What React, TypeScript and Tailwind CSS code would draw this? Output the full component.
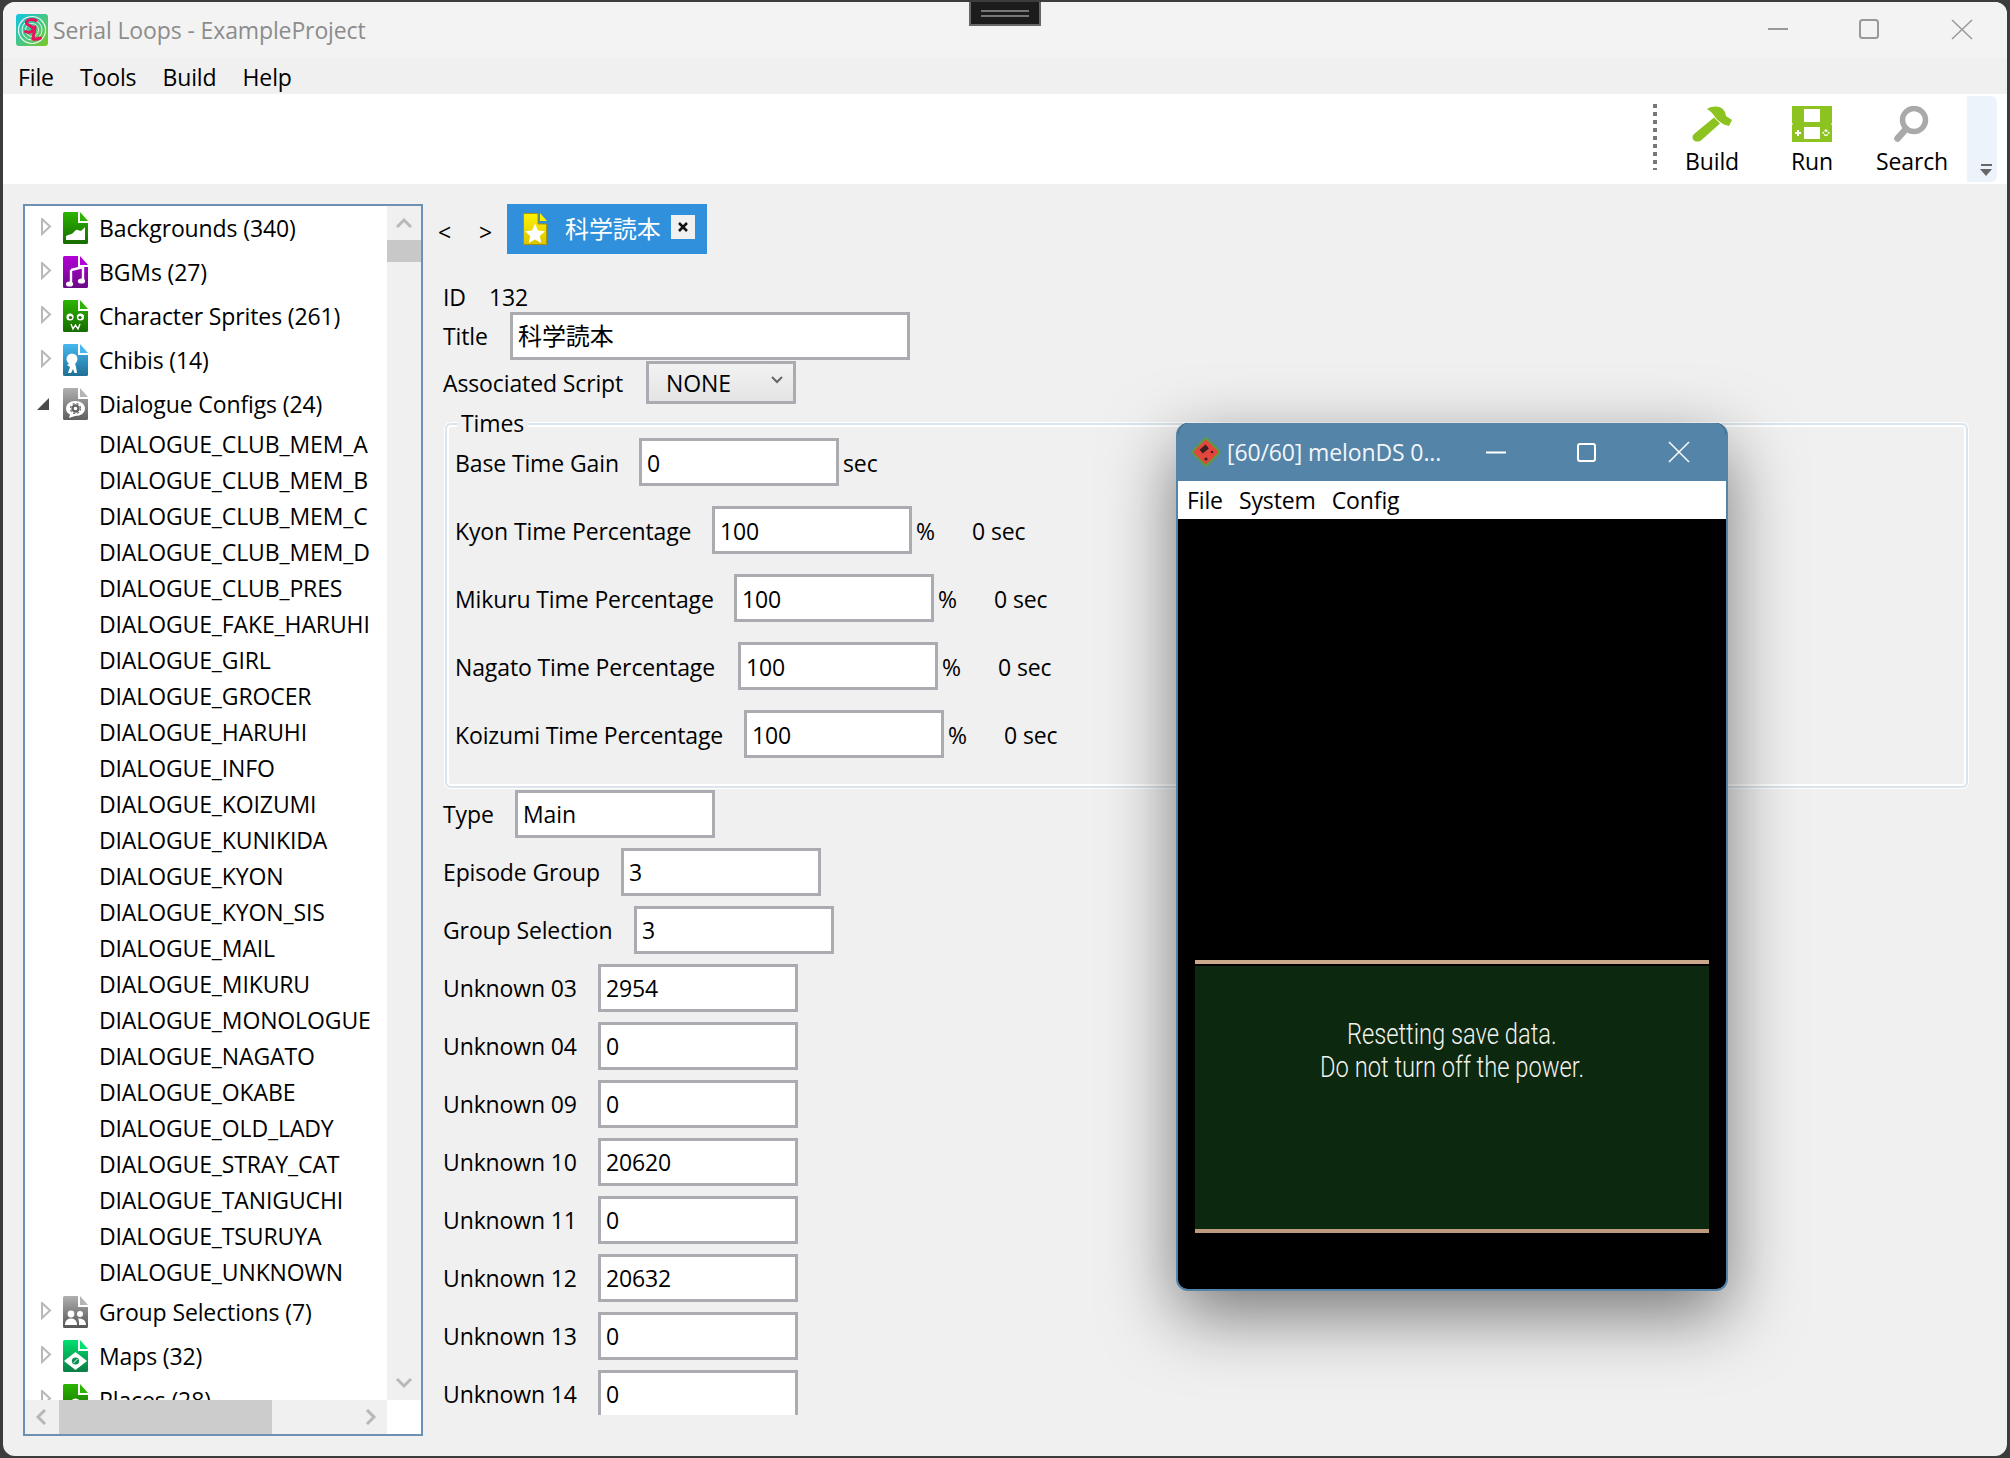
import React from "react";

const topGroups = [
  "DIALOGUE_CLUB_MEM_A",
  "DIALOGUE_CLUB_MEM_B",
  "DIALOGUE_CLUB_MEM_C",
  "DIALOGUE_CLUB_MEM_D",
  "DIALOGUE_CLUB_PRES",
  "DIALOGUE_FAKE_HARUHI",
  "DIALOGUE_GIRL",
  "DIALOGUE_GROCER",
  "DIALOGUE_HARUHI",
  "DIALOGUE_INFO",
  "DIALOGUE_KOIZUMI",
  "DIALOGUE_KUNIKIDA",
  "DIALOGUE_KYON",
  "DIALOGUE_KYON_SIS",
  "DIALOGUE_MAIL",
  "DIALOGUE_MIKURU",
  "DIALOGUE_MONOLOGUE",
  "DIALOGUE_NAGATO",
  "DIALOGUE_OKABE",
  "DIALOGUE_OLD_LADY",
  "DIALOGUE_STRAY_CAT",
  "DIALOGUE_TANIGUCHI",
  "DIALOGUE_TSURUYA",
  "DIALOGUE_UNKNOWN",
];

const FileIcon = ({ id, from, to, fold, children }: { id: string; from: string; to: string; fold: string; children?: React.ReactNode }) => (
  <svg width="25" height="32" viewBox="0 0 25 32" className="shrink-0">
    <defs>
      <linearGradient id={id} x1="0" y1="0" x2="0" y2="1">
        <stop offset="0" stopColor={from} />
        <stop offset="1" stopColor={to} />
      </linearGradient>
    </defs>
    <path d="M0 1.5Q0 0 1.5 0H15V11H25V30.5Q25 32 23.5 32H1.5Q0 32 0 30.5Z" fill={`url(#${id})`} />
    <path d="M17 0L25 9H17Z" fill={fold} />
    {children}
  </svg>
);

const Backgrounds = () => (
  <FileIcon id="g-bg" from="#2cb400" to="#176b00" fold="#2cb400">
    <path d="M3 28V24C6 22 8 23 10 21C12 19 13 17 15 18C17 19 18 20 22 15V28Z" fill="#fff" />
  </FileIcon>
);

const Bgms = () => (
  <FileIcon id="g-bgm" from="#b400d8" to="#6a0a86" fold="#b400d8">
    <path d="M8 14L20 11V25" fill="none" stroke="#fff" strokeWidth="2.4" />
    <path d="M8 14V28" fill="none" stroke="#fff" strokeWidth="2.4" />
    <ellipse cx="6.5" cy="28" rx="3.6" ry="2.6" fill="#fff" />
    <ellipse cx="18.5" cy="25" rx="3.6" ry="2.6" fill="#fff" />
  </FileIcon>
);

const Sprites = () => (
  <FileIcon id="g-spr" from="#2cb400" to="#176b00" fold="#2cb400">
    <circle cx="7" cy="17" r="3.6" fill="#fff" />
    <circle cx="17.5" cy="17" r="3.6" fill="#fff" />
    <circle cx="7.5" cy="17.5" r="1.6" fill="#1c6e00" />
    <circle cx="17" cy="17.5" r="1.6" fill="#1c6e00" />
    <path d="M8 24L10 29L12.5 25L15 29L17 24" fill="none" stroke="#fff" strokeWidth="1.4" />
  </FileIcon>
);

const Chibis = () => (
  <FileIcon id="g-chi" from="#45b8f0" to="#1f6f94" fold="#45b8f0">
    <circle cx="9" cy="15" r="5.5" fill="#fff" />
    <path d="M7 19H12L13 23L14 29H11.5L10 25L8 29H5L7 23L4 21Z" fill="#fff" />
  </FileIcon>
);

const Dialogue = () => (
  <FileIcon id="g-dia" from="#b0b0b0" to="#5f5f5f" fold="#b5b5b5">
    <path d="M12 13C18 13 22 16.5 22 20.5C22 25 18 28 12 28L6 30L7 26.5C4 25 3 23 3 20.5C3 16.5 7 13 12 13Z" fill="#fff" />
    <circle cx="12.5" cy="20.5" r="3" fill="none" stroke="#666" strokeWidth="2.4" />
    <circle cx="12.5" cy="20.5" r="5" fill="none" stroke="#666" strokeWidth="1.2" strokeDasharray="2 2" />
  </FileIcon>
);

const Groups = () => (
  <FileIcon id="g-grp" from="#b0b0b0" to="#555555" fold="#b5b5b5">
    <circle cx="8" cy="18" r="3.4" fill="#fff" />
    <circle cx="17" cy="18" r="3" fill="#fff" />
    <path d="M2 29C2 24 5 22.5 8 22.5C11 22.5 14 24 14 29Z" fill="#fff" />
    <path d="M15 22.5C19 22 23 24 23 29H16C16 26 16 24 15 22.5Z" fill="#fff" />
  </FileIcon>
);

const Maps = () => (
  <FileIcon id="g-map" from="#00e070" to="#0a7d45" fold="#00e070">
    <path d="M12.5 12L24 21L12.5 30L1 21Z" fill="#fff" />
    <circle cx="12.5" cy="21" r="3.6" fill="#0a8f50" />
    <path d="M10.5 23L14.5 19" stroke="#fff" strokeWidth="1" />
  </FileIcon>
);

const Places = () => (
  <FileIcon id="g-pla" from="#2cb400" to="#176b00" fold="#2cb400">
    <circle cx="12.5" cy="20" r="5.5" fill="#fff" />
  </FileIcon>
);

const Logo = () => (
  <svg width="32" height="32" viewBox="0 0 32 32" className="shrink-0">
    <defs>
      <linearGradient id="g-logo" x1="0" y1="0" x2="1" y2="1">
        <stop offset="0" stopColor="#10c4e8" />
        <stop offset="1" stopColor="#7cc820" />
      </linearGradient>
    </defs>
    <rect width="32" height="32" rx="3" fill="url(#g-logo)" />
    <circle cx="16" cy="16" r="13.5" fill="none" stroke="#e6f7ef" strokeWidth="1.2" />
    <circle cx="16" cy="16" r="10" fill="none" stroke="#e6f7ef" strokeWidth="1" />
    <circle cx="16" cy="16" r="6.5" fill="none" stroke="#e6f7ef" strokeWidth="1" />
    <path d="M20 6.5C15 4.5 10 6 10.5 9C11 12 17 11.5 17 15C17 18.5 12 19 9.5 17.5" fill="none" stroke="#e8135c" strokeWidth="3" strokeLinecap="round" />
    <path d="M19 13C18.5 17 17.5 21 17 25C19.5 25.5 22 25 24.5 24" fill="none" stroke="#e8135c" strokeWidth="3" strokeLinecap="round" />
  </svg>
);

const Hammer = () => (
  <svg width="40" height="36" viewBox="0 0 40 36">
    <path d="M15 3C22 -1 30 0 33 6L34 10L40 14L37 20L32 18.5L29.5 17L26 14.5L23 11C21 8 19 5 15 3Z" fill="#8cc320" />
    <path d="M22 11.5L28 17.5L9 34.5C7 36 3 36 1.5 34C0 32.5 0 30 2 28Z" fill="#8cc320" />
  </svg>
);

const Console = () => (
  <svg width="40" height="36" viewBox="0 0 40 36">
    <path d="M0 0H40V17L39 18L40 19V36H0V19L1 18L0 17Z" fill="#8cc320" />
    <rect x="12" y="3" width="16" height="13" fill="#fff" />
    <rect x="12" y="21" width="16" height="12" fill="#fff" />
    <path d="M3 27H9M6 24V30" stroke="#fff" strokeWidth="2" />
    <path d="M34 24L37 27L34 30L31 27Z" fill="none" stroke="#fff" strokeWidth="1.5" strokeDasharray="2 1" />
  </svg>
);

const Magnifier = () => (
  <svg width="36" height="36" viewBox="0 0 36 36">
    <circle cx="20" cy="14" r="11.5" fill="none" stroke="#a9a9a9" strokeWidth="5.5" />
    <path d="M12 23L3.5 32.5" stroke="#a9a9a9" strokeWidth="6.5" strokeLinecap="round" />
  </svg>
);

const StarFile = () => (
  <svg width="24" height="32" viewBox="0 0 24 32" className="shrink-0">
    <defs>
      <linearGradient id="g-star" x1="0" y1="0" x2="0" y2="1">
        <stop offset="0" stopColor="#fff200" />
        <stop offset="1" stopColor="#dcc400" />
      </linearGradient>
    </defs>
    <path d="M0.5 0.5H15V11H23.5V31.5H0.5Z" fill="url(#g-star)" stroke="#a89600" />
    <path d="M17 0L24 8H17Z" fill="#fff200" />
    <path d="M12 10.5L15 17.5L22 18.2L16.8 23L18.3 30L12 26.4L5.7 30L7.2 23L2 18.2L9 17.5Z" fill="#fff" />
  </svg>
);

const MelonIcon = () => (
  <svg width="30" height="30" viewBox="0 0 30 30" className="shrink-0">
    <rect x="4" y="4" width="22" height="22" rx="3" transform="rotate(45 15 15)" fill="#5f9a3c" />
    <rect x="6" y="6" width="18" height="18" rx="2" transform="rotate(45 15 15)" fill="#e2463f" />
    <rect x="9" y="10" width="8" height="5" transform="rotate(-40 12.5 12)" fill="#3a2020" />
    <circle cx="15" cy="22" r="1.6" fill="#3a2020" />
    <circle cx="21" cy="15" r="1.3" fill="#3a2020" />
  </svg>
);

const Expand = ({ open }: { open?: boolean }) => (
  <div className={`flex w-[38px] shrink-0 ${open ? "pl-[12px]" : "pl-[16px] pb-[2px]"}`}>
    {open ? (
      <svg width="14" height="14" viewBox="0 0 14 14">
        <path d="M0 13H12V1Z" fill="#4a4a4a" />
      </svg>
    ) : (
      <svg width="12" height="18" viewBox="0 0 12 18">
        <path d="M1 1L9 8.5L1 16Z" fill="none" stroke="#b8b8b8" strokeWidth="2" />
      </svg>
    )}
  </div>
);

const TreeRow = ({ icon, label, open }: { icon: React.ReactNode; label: string; open?: boolean }) => (
  <div className="flex h-[44px] shrink-0 items-center">
    <Expand open={open} />
    {icon}
    <span className="ml-[11px] whitespace-nowrap">{label}</span>
  </div>
);

const Chevron = ({ d }: { d: string }) => (
  <svg width="16" height="16" viewBox="0 0 16 16">
    <path d={d} fill="none" stroke="#b8b8b8" strokeWidth="3" />
  </svg>
);

const Tree = () => (
  <div className="grid h-[1232px] w-[400px] shrink-0 grid-cols-[362px_34px] grid-rows-[1194px_34px] border-2 border-[#6f8fb3] bg-white">
    <div className="overflow-hidden">
      <TreeRow icon={<Backgrounds />} label="Backgrounds (340)" />
      <TreeRow icon={<Bgms />} label="BGMs (27)" />
      <TreeRow icon={<Sprites />} label="Character Sprites (261)" />
      <TreeRow icon={<Chibis />} label="Chibis (14)" />
      <TreeRow icon={<Dialogue />} label="Dialogue Configs (24)" open />
      {topGroups.map((name) => (
        <div key={name} className="flex h-[36px] items-center pl-[74px] whitespace-nowrap">
          {name}
        </div>
      ))}
      <TreeRow icon={<Groups />} label="Group Selections (7)" />
      <TreeRow icon={<Maps />} label="Maps (32)" />
      <TreeRow icon={<Places />} label="Places (28)" />
    </div>
    <div className="flex flex-col items-center bg-[#f0f0f0]">
      <div className="flex h-[34px] w-full items-center justify-center">
        <Chevron d="M1 12L8 5L15 12" />
      </div>
      <div className="h-[22px] w-full bg-[#c8c8c8]" />
      <div className="mt-auto flex h-[34px] w-full items-center justify-center">
        <Chevron d="M1 4L8 11L15 4" />
      </div>
    </div>
    <div className="flex items-center bg-[#f0f0f0]">
      <div className="flex w-[34px] justify-center">
        <Chevron d="M11 1L4 8L11 15" />
      </div>
      <div className="h-full w-[213px] bg-[#cccccc]" />
      <div className="ml-auto flex w-[34px] justify-center">
        <Chevron d="M5 1L12 8L5 15" />
      </div>
    </div>
    <div className="bg-white" />
  </div>
);

const TextBox = ({ value, className = "w-[200px]" }: { value: string; className?: string }) => (
  <div className={`flex h-[48px] shrink-0 items-center border-[3px] border-[#abacb1] bg-white pl-[5px] ${className}`}>{value}</div>
);

const timeRows = [
  { label: "Kyon Time Percentage", width: "w-[257px]" },
  { label: "Mikuru Time Percentage", width: "w-[279px]" },
  { label: "Nagato Time Percentage", width: "w-[283px]" },
  { label: "Koizumi Time Percentage", width: "w-[289px]" },
];

const fieldRows = [
  { label: "Type", width: "w-[72px]", value: "Main" },
  { label: "Episode Group", width: "w-[178px]", value: "3" },
  { label: "Group Selection", width: "w-[191px]", value: "3" },
  { label: "Unknown 03", width: "w-[155px]", value: "2954" },
  { label: "Unknown 04", width: "w-[155px]", value: "0" },
  { label: "Unknown 09", width: "w-[155px]", value: "0" },
  { label: "Unknown 10", width: "w-[155px]", value: "20620" },
  { label: "Unknown 11", width: "w-[155px]", value: "0" },
  { label: "Unknown 12", width: "w-[155px]", value: "20632" },
  { label: "Unknown 13", width: "w-[155px]", value: "0" },
  { label: "Unknown 14", width: "w-[155px]", value: "0" },
];

const Editor = () => (
  <div className="h-[1211px] flex-1 overflow-hidden pl-[20px]">
    <div className="flex h-[50px] items-center">
      <span className="-ml-[5px] mt-[6px] w-[41px]">&lt;</span>
      <span className="mt-[6px] w-[28px]">&gt;</span>
      <div className="flex h-[50px] w-[200px] items-center bg-[#3090dc] pl-[16px] text-white">
        <StarFile />
        <span className="ml-[18px] w-[106px] whitespace-nowrap text-[24px]">科学読本</span>
        <div className="mb-[4px] flex h-[24px] w-[24px] items-center justify-center bg-[#f0f0f0]">
          <svg width="10" height="10" viewBox="0 0 10 10">
            <path d="M1 1L9 9M9 1L1 9" stroke="#111" strokeWidth="2.5" />
          </svg>
        </div>
      </div>
    </div>
    <div className="mb-[1px] mt-[29px] flex h-[28px] items-center">
      <span className="w-[46px]">ID</span>
      <span>132</span>
    </div>
    <div className="flex items-center">
      <span className="w-[67px]">Title</span>
      <TextBox value="科学読本" className="w-[400px] text-[24px]" />
    </div>
    <div className="mt-[1px] flex items-center">
      <span className="w-[203px]">Associated Script</span>
      <div className="flex h-[43px] w-[150px] items-center justify-between border-[3px] border-[#abacb1] bg-gradient-to-b from-[#f2f2f2] to-[#e4e4e4] pl-[17px] pr-[10px]">
        <span>NONE</span>
        <svg width="12" height="8" viewBox="0 0 12 8" className="mb-[6px]">
          <path d="M1 1L6 6L11 1" fill="none" stroke="#666" strokeWidth="2" />
        </svg>
      </div>
    </div>
    <div className="relative ml-[2px] mt-[19px] flex h-[365px] w-[1523px] flex-col gap-[20px] rounded-[6px] border-2 border-[#dbe4ea] pl-[8px] pt-[13px] shadow-[inset_0_0_0_2px_#fff,0_0_0_1px_#fff]">
      <span className="absolute -top-[16px] left-[10px] bg-[#f0f0f0] px-[4px] leading-[28px]">Times</span>
      <div className="flex items-center">
        <span className="w-[184px] whitespace-nowrap pt-[2px]">Base Time Gain</span>
        <TextBox value="0" className="w-[200px] pt-[2px]" />
        <span className="ml-[4px] pt-[2px]">sec</span>
      </div>
      {timeRows.map((row) => (
        <div key={row.label} className="flex items-center">
          <span className={`whitespace-nowrap pt-[2px] ${row.width}`}>{row.label}</span>
          <TextBox value="100" className="w-[200px] pt-[2px]" />
          <span className="ml-[4px] w-[56px] pt-[2px]">%</span>
          <span className="pt-[2px]">0 sec</span>
        </div>
      ))}
    </div>
    <div className="mt-[2px] flex flex-col gap-[10px]">
      {fieldRows.map((row) => (
        <div key={row.label} className="flex items-center">
          <span className={`whitespace-nowrap ${row.width}`}>{row.label}</span>
          <TextBox value={row.value} />
        </div>
      ))}
    </div>
  </div>
);

const MelonWindow = () => (
  <div className="absolute left-[1173px] top-[421px] flex h-[868px] w-[552px] flex-col overflow-hidden rounded-[12px] border-x-2 border-b-2 border-[#5484a8] bg-black shadow-[0_24px_70px_rgba(0,0,0,0.5)]">
    <div className="-mx-[2px] flex h-[58px] shrink-0 items-center bg-[#5484a8] pl-[15px] text-[#f2f6fa]">
      <MelonIcon />
      <span className="ml-[6px] whitespace-nowrap">[60/60] melonDS 0...</span>
    </div>
    <svg width="552" height="58" viewBox="0 0 552 58" className="absolute -left-[2px] top-0">
      <path d="M310 29.5H330" stroke="#fff" strokeWidth="2" />
      <rect x="402" y="21" width="17" height="17" rx="2" fill="none" stroke="#fff" strokeWidth="2" />
      <path d="M493 19L513 39M513 19L493 39" stroke="#fff" strokeWidth="1.5" />
    </svg>
    <div className="flex h-[38px] shrink-0 items-center gap-[16px] bg-white pl-[9px] text-black">
      <span>File</span>
      <span>System</span>
      <span>Config</span>
    </div>
    <div className="ml-[17px] mt-[441px] w-[514px]">
      <div className="h-[4px] bg-[#cba88c]" />
      <div className="mt-[2px] flex h-[263px] flex-col items-center bg-[#0c280e] pt-[51px] font-['Roboto',sans-serif] text-[30px] font-light leading-[33px] tracking-normal text-[#f2f2ee]">
        <span className="scale-x-[0.79] whitespace-nowrap">Resetting save data.</span>
        <span className="scale-x-[0.79] whitespace-nowrap">Do not turn off the power.</span>
      </div>
      <div className="h-[4px] bg-[#c09a7c]" />
    </div>
  </div>
);

export default function App() {
  return (
    <div className="h-[1458px] w-[2010px] overflow-hidden bg-[#3c3c3c] px-[3px] pb-[2px] pt-[2px] font-['Open_Sans','Noto_Sans_CJK_JP',sans-serif] text-[23px] leading-[28px] tracking-[-0.12px] text-black">
      <div className="relative flex h-full flex-col overflow-hidden rounded-[12px] bg-[#f0f0f0]">
        <div className="flex h-[56px] shrink-0 items-center justify-between bg-[#f3f3f3] pl-[13px] text-[#8c8c8c]">
          <div className="flex items-center">
            <Logo />
            <span className="ml-[5px] whitespace-nowrap">Serial Loops - ExampleProject</span>
          </div>
          <svg width="240" height="56" viewBox="0 0 240 56" className="mr-[2px]">
            <path d="M3 27H23" stroke="#999" strokeWidth="2" />
            <rect x="95" y="18" width="18" height="18" rx="2.5" fill="none" stroke="#999" strokeWidth="2" />
            <path d="M187 18L207 37M207 18L187 37" stroke="#999" strokeWidth="1.5" />
          </svg>
        </div>
        <div className="flex h-[36px] shrink-0 items-center gap-[26px] pl-[15px] pt-[2px]">
          <span>File</span>
          <span>Tools</span>
          <span>Build</span>
          <span>Help</span>
        </div>
        <div className="flex h-[90px] shrink-0 items-stretch justify-end bg-white pr-[10px]">
          <div className="mr-[5px] mt-[10px] h-[66px] w-[4px] bg-[repeating-linear-gradient(to_bottom,#777_0,#777_4px,transparent_4px,transparent_8px)]" />
          {[
            { label: "Build", icon: <Hammer /> },
            { label: "Run", icon: <Console /> },
            { label: "Search", icon: <Magnifier /> },
          ].map((tool) => (
            <div key={tool.label} className="flex w-[100px] flex-col items-center pt-[12px]">
              <div className="h-[36px]">{tool.icon}</div>
              <span className="mt-[5px]">{tool.label}</span>
            </div>
          ))}
          <div className="ml-[5px] mt-[2px] flex h-[86px] w-[30px] flex-col items-center justify-end rounded-r-[6px] bg-[#edf3fb] pb-[6px] pl-[8px]">
            <div className="mb-[3px] h-[2px] w-[11px] bg-[#666]" />
            <svg width="12" height="7" viewBox="0 0 12 7">
              <path d="M0 0H12L6 7Z" fill="#666" />
            </svg>
          </div>
        </div>
        <div className="flex min-h-0 flex-1 pl-[20px] pt-[20px]">
          <Tree />
          <Editor />
        </div>
        <div className="absolute -top-[2px] left-[966px] flex h-[26px] w-[72px] flex-col items-center justify-center gap-[3px] border-2 border-[#666] bg-[#1c1c1c]">
          <div className="h-[2px] w-[48px] bg-[#777]" />
          <div className="h-[2px] w-[48px] bg-[#777]" />
        </div>
        <MelonWindow />
      </div>
    </div>
  );
}
